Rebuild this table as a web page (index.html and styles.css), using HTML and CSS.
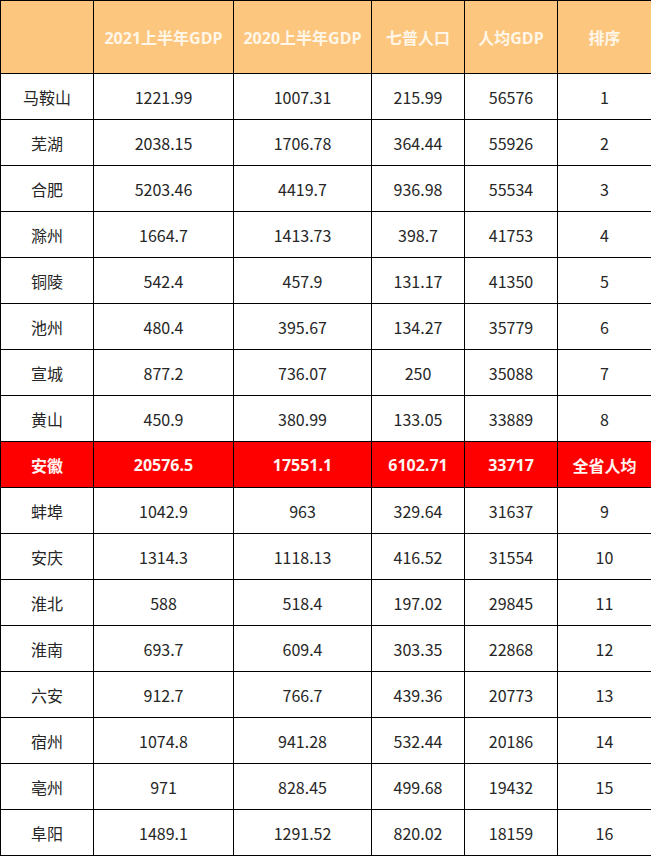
FILE: index.html
```html
<!DOCTYPE html>
<html lang="zh">
<head>
<meta charset="utf-8">
<link rel="stylesheet" href="styles.css">
</head>
<body>
<table class="gdp">
<colgroup>
<col class="c1"><col class="c2"><col class="c3"><col class="c4"><col class="c5"><col class="c6">
</colgroup>
<thead>
<tr><th></th><th>2021上半年GDP</th><th>2020上半年GDP</th><th>七普人口</th><th>人均GDP</th><th>排序</th></tr>
</thead>
<tbody>
<tr><td>马鞍山</td><td>1221.99</td><td>1007.31</td><td>215.99</td><td>56576</td><td>1</td></tr>
<tr><td>芜湖</td><td>2038.15</td><td>1706.78</td><td>364.44</td><td>55926</td><td>2</td></tr>
<tr><td>合肥</td><td>5203.46</td><td>4419.7</td><td>936.98</td><td>55534</td><td>3</td></tr>
<tr><td>滁州</td><td>1664.7</td><td>1413.73</td><td>398.7</td><td>41753</td><td>4</td></tr>
<tr><td>铜陵</td><td>542.4</td><td>457.9</td><td>131.17</td><td>41350</td><td>5</td></tr>
<tr><td>池州</td><td>480.4</td><td>395.67</td><td>134.27</td><td>35779</td><td>6</td></tr>
<tr><td>宣城</td><td>877.2</td><td>736.07</td><td>250</td><td>35088</td><td>7</td></tr>
<tr><td>黄山</td><td>450.9</td><td>380.99</td><td>133.05</td><td>33889</td><td>8</td></tr>
<tr class="total"><td>安徽</td><td>20576.5</td><td>17551.1</td><td>6102.71</td><td>33717</td><td>全省人均</td></tr>
<tr><td>蚌埠</td><td>1042.9</td><td>963</td><td>329.64</td><td>31637</td><td>9</td></tr>
<tr><td>安庆</td><td>1314.3</td><td>1118.13</td><td>416.52</td><td>31554</td><td>10</td></tr>
<tr><td>淮北</td><td>588</td><td>518.4</td><td>197.02</td><td>29845</td><td>11</td></tr>
<tr><td>淮南</td><td>693.7</td><td>609.4</td><td>303.35</td><td>22868</td><td>12</td></tr>
<tr><td>六安</td><td>912.7</td><td>766.7</td><td>439.36</td><td>20773</td><td>13</td></tr>
<tr><td>宿州</td><td>1074.8</td><td>941.28</td><td>532.44</td><td>20186</td><td>14</td></tr>
<tr><td>亳州</td><td>971</td><td>828.45</td><td>499.68</td><td>19432</td><td>15</td></tr>
<tr><td>阜阳</td><td>1489.1</td><td>1291.52</td><td>820.02</td><td>18159</td><td>16</td></tr>
</tbody>
</table>
</body>
</html>
```

FILE: styles.css
```css
html, body {
  margin: 0;
  padding: 0;
  background: #ffffff;
}

.gdp {
  border-collapse: collapse;
  table-layout: fixed;
  width: 651px;
  font-family: "Noto Sans CJK SC", "Noto Sans", sans-serif;
  font-size: 16px;
  color: #262626;
}

.c1 { width: 93px; }
.c2 { width: 140px; }
.c3 { width: 138px; }
.c4 { width: 93px; }
.c5 { width: 93px; }
.c6 { width: 94px; }

.gdp th,
.gdp td {
  border: 1px solid #000000;
  padding: 0;
  text-align: center;
  vertical-align: middle;
  white-space: nowrap;
}

.gdp th {
  height: 72px;
  background: #fcc67e;
  color: #fff6e8;
  font-family: "Open Sans", "Noto Sans CJK SC", sans-serif;
  font-weight: 700;
}

.gdp td {
  height: 45px;
}

.gdp tr.total td {
  background: #fe0000;
  color: #fff4f0;
  font-family: "Open Sans", "Noto Sans CJK SC", sans-serif;
  font-weight: 700;
}
```
